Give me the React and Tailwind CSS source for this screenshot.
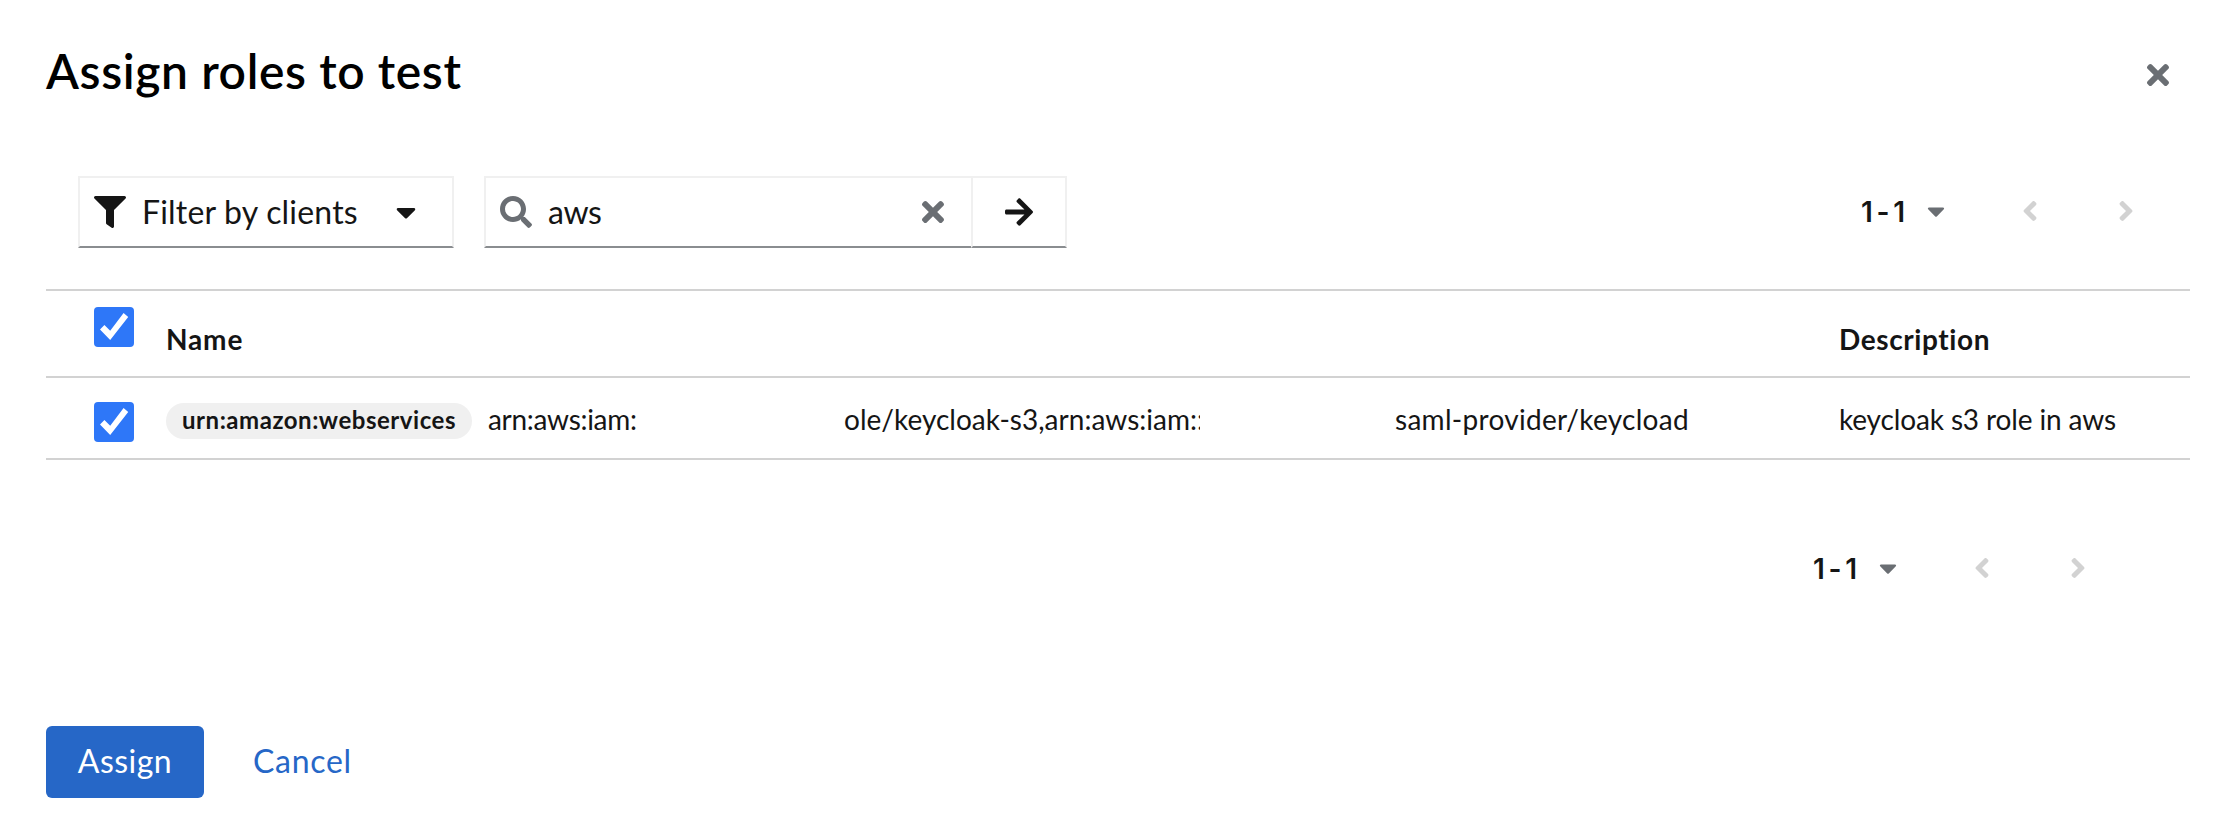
import React from "react";
import {
  FaFilter,
  FaCaretDown,
  FaSearch,
  FaTimes,
  FaArrowRight,
  FaAngleLeft,
  FaAngleRight,
} from "react-icons/fa";

function Checkbox() {
  return (
    <span className="flex h-10 w-10 shrink-0 rounded-[4px] bg-[#2e77f8]">
      <svg viewBox="0 0 40 40" className="h-10 w-10">
        <path d="M6 22.4 10.4 18 16.2 23.8 29.6 6 34.2 10 16.2 33Z" fill="#fff" />
      </svg>
    </span>
  );
}

function Pagination() {
  return (
    <div className="flex h-10 w-[326px] items-center">
      <span className="w-[62px] whitespace-pre pl-px pt-px font-['Inter'] text-[28px] font-semibold leading-10 tracking-[-1.7px]">
        1 - 1
      </span>
      <FaCaretDown className="h-7 w-7 text-[#6a6e73]" />
      <FaAngleLeft className="ml-16 h-8 w-8 text-[#d2d2d2]" />
      <FaAngleRight className="ml-16 h-8 w-8 text-[#d2d2d2]" />
    </div>
  );
}

export default function App() {
  return (
    <main className="flex h-[836px] w-[2232px] flex-col overflow-hidden bg-white font-['Lato',sans-serif] text-[#151515]">
      <header className="flex h-[176px] justify-between pl-[46px] pr-[58px]">
        <h1 className="pt-[42px] text-[48px] font-semibold leading-[58px] tracking-[0.62px] text-black">
          Assign roles to test
        </h1>
        <button className="mt-[59px] h-8 w-8">
          <FaTimes className="h-8 w-8 text-[#6a6e73]" />
        </button>
      </header>

      <section className="flex h-[72px] items-center pl-[78px] pr-[46px]">
        <button className="flex h-[72px] w-[376px] items-center border-2 border-[#f0f0f0] border-b-[#8a8d90] pl-[14px] pb-px">
          <FaFilter className="h-8 w-8" />
          <span className="ml-4 w-[248px] text-left text-[32px] leading-10 tracking-[0.2px]">
            Filter by clients
          </span>
          <FaCaretDown className="h-8 w-8" />
        </button>
        <div className="ml-[30px] flex h-[72px] w-[583px]">
          <div className="flex w-[487px] items-center border-2 border-r-0 border-[#f0f0f0] border-b-[#8a8d90] pl-[14px] pb-px">
            <FaSearch className="h-8 w-8 text-[#6a6e73]" />
            <span className="ml-4 w-[369px] text-[32px] leading-10 tracking-[-0.4px]">aws</span>
            <FaTimes className="h-8 w-8 text-[#6a6e73]" />
          </div>
          <button className="flex flex-1 items-center border-2 border-[#f0f0f0] border-b-[#8a8d90] pl-[30px] pb-px">
            <FaArrowRight className="h-8 w-8" />
          </button>
        </div>
        <div className="ml-auto mb-[2px]">
          <Pagination />
        </div>
      </section>

      <section className="mx-[46px] mt-[41px] w-[2144px] text-[28px] leading-10">
        <div className="flex h-[89px] border-y-2 border-[#d2d2d2] pl-12 font-bold">
          <div className="w-[72px] pt-4">
            <Checkbox />
          </div>
          <div className="w-[1673px] pt-7 tracking-[0.85px]">Name</div>
          <div className="pt-7 tracking-[0.6px]">Description</div>
        </div>
        <div className="flex h-[82px] border-b-2 border-[#d2d2d2] pl-12">
          <div className="w-[72px] pt-6">
            <Checkbox />
          </div>
          <div className="flex w-[1673px] pt-[21px]">
            <span className="mt-1 flex h-9 w-[306px] items-center justify-center rounded-full bg-[#f0f0f0] pb-[2px] text-[24px] font-bold leading-8 tracking-[0.53px]">
              urn:amazon:webservices
            </span>
            <span className="ml-4 w-[356px] tracking-[-0.3px]">arn:aws:iam:</span>
            <span className="w-[356px] overflow-hidden whitespace-nowrap tracking-[0.02px]">
              ole/keycloak-s3,arn:aws:iam::
            </span>
            <span className="ml-[195px] tracking-[0.29px]">saml-provider/keycload</span>
          </div>
          <div className="pt-[21px] tracking-[-0.13px]">keycloak s3 role in aws</div>
        </div>
      </section>

      <div className="mt-[88px] flex justify-end pr-[94px]">
        <Pagination />
      </div>

      <footer className="mt-[138px] flex h-[72px] items-center pl-[46px] text-[32px] leading-10">
        <button className="flex h-[72px] w-[158px] items-center justify-center rounded-[6px] bg-[#2667c7] pb-[2px] tracking-[0.46px] text-white">
          Assign
        </button>
        <button className="ml-[49px] pb-[2px] tracking-[0.7px] text-[#2667c7]">Cancel</button>
      </footer>
    </main>
  );
}
